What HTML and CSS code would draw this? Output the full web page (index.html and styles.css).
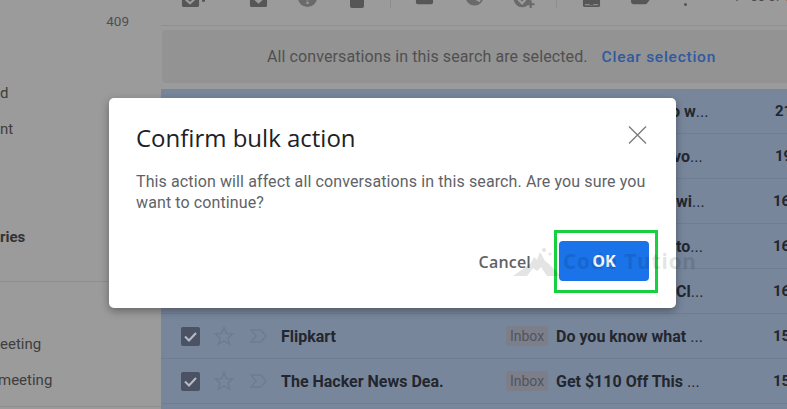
FILE: index.html
```html
<!DOCTYPE html>
<html lang="en">
<head>
  <meta charset="UTF-8" />
  <title>Confirm bulk action</title>
  <link rel="stylesheet" href="styles.css">
</head>
<body>
  <div class="page">
    <aside class="sidebar">
      <div class="count">409</div>
      <div class="side-item side-first">d</div>
      <div class="side-item side-second">nt</div>
      <div class="side-item side-cat">ries</div>
      <div class="side-rule"></div>
      <div class="side-item side-meet">eeting</div>
      <div class="side-item side-meet side-join">meeting</div>
      <div class="side-rule side-rule-low"></div>
    </aside>

    <main class="mail">
      <div class="toolbar">
        <svg class="tool tool-check" viewBox="0 0 20 20"><path d="M3 0h14a2 2 0 0 1 2 2v15a2 2 0 0 1-2 2H3a2 2 0 0 1-2-2V2a2 2 0 0 1 2-2z" fill="#565656"/><path d="M5 11l4.5 4L15 10" stroke="#9b9b9b" stroke-width="2.2" fill="none"/></svg>
        <span class="tool-dot tool-dot-check"></span>
        <svg class="tool tool-archive" viewBox="0 0 20 20"><path d="M1 0h18v17a2 2 0 0 1-2 2H3a2 2 0 0 1-2-2z" fill="#565656"/><path d="M4 10l6 5.5 6-5.5z" fill="#9b9b9b"/></svg>
        <svg class="tool tool-spam" viewBox="0 0 20 20"><circle cx="10" cy="9" r="10" fill="#6a6a6a"/><rect x="8.8" y="10" width="2.4" height="2" fill="#9b9b9b"/><rect x="8.8" y="13.4" width="2.4" height="2.4" fill="#9b9b9b"/></svg>
        <svg class="tool tool-trash" viewBox="0 0 14 19"><rect x="0" y="0" width="14" height="19" rx="2" fill="#565656"/></svg>
        <span class="tool-sep tool-sep-a"></span>
        <svg class="tool tool-mail" viewBox="0 0 20 20"><rect x="1" y="0" width="18" height="17" rx="2" fill="#565656"/><path d="M1 11h18" stroke="#6e6e6e" stroke-width="1"/></svg>
        <svg class="tool tool-snooze" viewBox="0 0 20 20"><circle cx="10" cy="8" r="9.4" fill="#6a6a6a"/><path d="M7 8l9 5" stroke="#9b9b9b" stroke-width="2.4" fill="none"/></svg>
        <svg class="tool tool-task" viewBox="0 0 23 20"><circle cx="9" cy="8" r="9" fill="#6a6a6a"/><path d="M4 8l5 5 6-7" stroke="#9b9b9b" stroke-width="2.4" fill="none"/><path d="M18 10v8M14 14h8" stroke="#6a6a6a" stroke-width="2.2"/></svg>
        <span class="tool-sep tool-sep-b"></span>
        <svg class="tool tool-move" viewBox="0 0 20 20"><path d="M1 0h18v17a2 2 0 0 1-2 2H3a2 2 0 0 1-2-2z" fill="#565656"/><path d="M6 11h8l-4-4zM3 16h5l1 1.5h2l1-1.5h5v1H3z" fill="#9b9b9b"/></svg>
        <svg class="tool tool-label" viewBox="0 0 20 20"><path d="M0 0h20v12l-3 4a3 3 0 0 1-3 1H3a3 3 0 0 1-3-3z" fill="#565656"/></svg>
        <span class="tool-dot tool-dot-more"></span>
        <span class="pager">1 - 50 of 1</span>
      </div>

      <div class="banner">
        <span class="banner-text">All conversations in this search are selected.</span>
        <a class="banner-link">Clear selection</a>
      </div>

      <div class="rows">
        <div class="row"><span class="tail tail-first">o w<em>...</em></span><span class="date">21</span></div>
        <div class="row"><span class="tail tail-second">vo<em>...</em></span><span class="date">19</span></div>
        <div class="row"><span class="tail">wi<em>...</em></span><span class="date">16</span></div>
        <div class="row"><span class="tail">to<em>...</em></span><span class="date">16</span></div>
        <div class="row"><span class="tail">Cl<em>...</em></span><span class="date">16</span></div>
        <div class="row">
          <svg class="checkbox" viewBox="0 0 19 19"><rect width="19" height="19" rx="2" fill="#4a5264"/><path d="M4 9.5l4 4 7-7.5" stroke="#b5bcc8" stroke-width="2" fill="none"/></svg>
          <svg class="star" viewBox="0 0 24 24"><path d="M12 3l2.7 6.2 6.8.6-5.1 4.5 1.5 6.6L12 17.4l-5.9 3.5 1.5-6.6-5.1-4.5 6.8-.6z" fill="none" stroke="#6e7b90" stroke-width="1.7"/></svg>
          <svg class="mark" viewBox="0 0 18 14"><path d="M1 1h10l5 6-5 6H1l5-6z" fill="none" stroke="#6e7b90" stroke-width="1.4"/></svg>
          <span class="sender">Flipkart</span>
          <span class="chip">Inbox</span>
          <span class="subject">Do you know what <em>...</em></span>
          <span class="date">15</span>
        </div>
        <div class="row">
          <svg class="checkbox" viewBox="0 0 19 19"><rect width="19" height="19" rx="2" fill="#4a5264"/><path d="M4 9.5l4 4 7-7.5" stroke="#b5bcc8" stroke-width="2" fill="none"/></svg>
          <svg class="star" viewBox="0 0 24 24"><path d="M12 3l2.7 6.2 6.8.6-5.1 4.5 1.5 6.6L12 17.4l-5.9 3.5 1.5-6.6-5.1-4.5 6.8-.6z" fill="none" stroke="#6e7b90" stroke-width="1.7"/></svg>
          <svg class="mark" viewBox="0 0 18 14"><path d="M1 1h10l5 6-5 6H1l5-6z" fill="none" stroke="#6e7b90" stroke-width="1.4"/></svg>
          <span class="sender">The Hacker News Dea.</span>
          <span class="chip">Inbox</span>
          <span class="subject">Get $110 Off This <em>...</em></span>
          <span class="date">15</span>
        </div>
      </div>
    </main>
  </div>

  <div class="overlay">
    <div class="dialog">
      <div class="dialog-head">
        <h1 class="dialog-title">Confirm bulk action</h1>
        <svg class="dialog-close" viewBox="0 0 19 18"><path d="M1 0.5l17 17M18 0.5l-17 17" stroke="#7c7c7c" stroke-width="1.4" fill="none"/></svg>
      </div>
      <p class="dialog-text">This action will affect all conversations in this search. Are you sure you want to continue?</p>
      <div class="dialog-actions">
        <button class="btn-cancel">Cancel</button>
        <div class="highlight"><button class="btn-ok">OK</button></div>
      </div>
    </div>
  </div>

  <div class="watermark">
    <svg class="watermark-logo" viewBox="0 0 48 30"><path d="M0 30L18 17l3-6 3 3 3-8 5 9 4 3 12 12H34l-6-9-4 4-4-3-6 8z" fill="#000"/><circle cx="31" cy="4" r="2" fill="#000"/><circle cx="37" cy="8" r="1.5" fill="#000"/></svg>
    <span class="watermark-text">Code Tution</span>
  </div>
</body>
</html>
```

FILE: styles.css
```css
* {
  box-sizing: border-box;
}

html, body {
  height: 100%;
}

body {
  margin: 0;
  overflow: hidden;
  background-color: #9b9b9b;
  font-family: Roboto, "Liberation Sans", sans-serif;
  color: #222;
}

.page {
  display: flex;
  height: 409px;
}

/* Sidebar, cut by the left edge */
.sidebar {
  width: 161px;
  flex: none;
  display: flex;
  flex-direction: column;
  color: #3e3e3e;
  font-size: 15px;
}

.count {
  margin-top: 12px;
  height: 18px;
  line-height: 18px;
  padding-right: 32px;
  text-align: right;
  font-size: 13.5px;
  color: #4f4f4f;
}

.side-item {
  height: 20px;
  line-height: 20px;
  white-space: nowrap;
}

.side-first {
  margin-top: 53px;
}

.side-second {
  margin-top: 16px;
}

.side-cat {
  margin-top: 88px;
  font-weight: 700;
  color: #333;
}

.side-rule {
  height: 1px;
  margin-top: 34px;
  background-color: #8d8d8d;
}

.side-meet {
  margin-top: 52px;
}

.side-join {
  margin-top: 16px;
  margin-left: -2px;
}

.side-rule-low {
  margin-top: 16px;
}

/* Main column */
.mail {
  flex: 1;
  min-width: 0;
  display: flex;
  flex-direction: column;
}

.toolbar {
  position: relative;
  height: 26px;
  flex: none;
  overflow: hidden;
  border-bottom: 1px solid #8f8f8f;
}

.tool {
  position: absolute;
  top: -11px;
  width: 19px;
  height: 19px;
}

.tool-check { left: 20px; }
.tool-archive { left: 88px; }
.tool-spam { left: 137px; }
.tool-trash { left: 189px; width: 14px; }
.tool-mail { left: 254px; top: -12px; }
.tool-snooze { left: 304px; }
.tool-task { left: 352px; top: -9px; width: 23px; }
.tool-move { left: 421px; }
.tool-label { left: 470px; top: -12px; }

.tool-dot {
  position: absolute;
  width: 3px;
  height: 3px;
  border-radius: 50%;
  background-color: #555;
}

.tool-dot-check { left: 41px; top: -1px; }
.tool-dot-more { left: 523px; top: 3px; }

.tool-sep {
  position: absolute;
  top: 0;
  width: 1px;
  height: 8px;
  background-color: #8d8d8d;
}

.tool-sep-a { left: 229px; }
.tool-sep-b { left: 395px; }

.pager {
  position: absolute;
  left: 572px;
  top: -11px;
  font-size: 13px;
  line-height: 15px;
  white-space: nowrap;
  color: #4a4a4a;
}

.banner {
  height: 53px;
  flex: none;
  margin: 4px 0 6px 1px;
  display: flex;
  align-items: center;
  gap: 14px;
  padding-left: 105px;
  background-color: #939393;
  border-radius: 4px 0 0 4px;
  font-size: 16px;
}

.banner-text {
  color: #505050;
  letter-spacing: 0.1px;
}

.banner-link {
  color: #2f5aa0;
  font-weight: 500;
  font-size: 15.5px;
  letter-spacing: 0.75px;
}

.rows {
  flex: 1;
  background-color: #78869c;
}

.row {
  height: 45px;
  display: flex;
  align-items: center;
  overflow: hidden;
  border-bottom: 1px solid #6f7d93;
  font-size: 16px;
  font-weight: 700;
  color: #23262e;
}

.checkbox {
  width: 19px;
  height: 19px;
  flex: none;
  margin-left: 20px;
}

.star {
  width: 22px;
  height: 22px;
  flex: none;
  margin-left: 13px;
}

.mark {
  width: 18px;
  height: 14px;
  flex: none;
  margin-left: 15px;
}

.sender {
  width: 225px;
  flex: none;
  margin-left: 13px;
  white-space: nowrap;
}

.chip {
  width: 42px;
  height: 20px;
  flex: none;
  line-height: 20px;
  text-align: center;
  border-radius: 3px;
  background-color: #7c7f8a;
  color: #51545c;
  font-size: 14px;
  font-weight: 400;
}

.subject {
  width: 217px;
  flex: none;
  margin-left: 8px;
  white-space: nowrap;
}

.subject em,
.tail em {
  font-style: normal;
  font-weight: 400;
}

/* Rows behind the dialog: only the end of the subject shows */
.tail {
  width: 97px;
  flex: none;
  margin-left: 515px;
  white-space: nowrap;
}

.tail-first {
  margin-left: 510px;
  width: 104px;
}

.tail-second {
  margin-left: 512px;
  width: 102px;
}

.date {
  flex: none;
  font-size: 15px;
}

/* Modal */
.overlay {
  position: absolute;
  left: 109px;
  top: 98px;
}

.dialog {
  width: 567px;
  height: 210px;
  display: flex;
  flex-direction: column;
  padding: 22px 27px 15px;
  background-color: #fff;
  border-radius: 5px;
  box-shadow: 0 3px 8px rgba(0, 0, 0, 0.35);
}

.dialog-head {
  display: flex;
  align-items: flex-start;
  justify-content: space-between;
}

.dialog-title {
  margin: 0;
  font-family: "Open Sans", Roboto, sans-serif;
  font-size: 24px;
  font-weight: 400;
  line-height: 36px;
  color: #202124;
}

.dialog-close {
  width: 19px;
  height: 18px;
  margin: 6px 2px 0 0;
}

.dialog-text {
  margin: 15px 0 0;
  width: 520px;
  font-size: 16px;
  line-height: 21px;
  letter-spacing: 0.11px;
  color: #5f6368;
}

.dialog-actions {
  margin-top: auto;
  display: flex;
  align-items: center;
  justify-content: flex-end;
  gap: 23px;
  margin-right: -9px;
}

.btn-cancel {
  padding: 0;
  border: none;
  background: none;
  font-family: "Open Sans", Roboto, sans-serif;
  font-size: 16px;
  font-weight: 600;
  letter-spacing: 0.2px;
  color: #5f6368;
}

.highlight {
  width: 104px;
  height: 63px;
  border: 3px solid #17d03f;
  padding: 8px 6px 9px 2px;
}

.btn-ok {
  display: block;
  width: 90px;
  height: 40px;
  border: none;
  border-radius: 4px;
  background-color: #1a73e8;
  font-family: "Open Sans", Roboto, sans-serif;
  font-size: 16px;
  font-weight: 700;
  color: #fff;
}

/* Faint watermark over everything */
.watermark {
  position: absolute;
  left: 513px;
  top: 246px;
  display: flex;
  align-items: center;
  gap: 2px;
  opacity: 0.1;
  pointer-events: none;
}

.watermark-logo {
  width: 48px;
  height: 30px;
}

.watermark-text {
  font-family: "Open Sans", sans-serif;
  font-size: 20.5px;
  font-weight: 700;
  letter-spacing: 1px;
  white-space: nowrap;
  color: #000;
}
```
